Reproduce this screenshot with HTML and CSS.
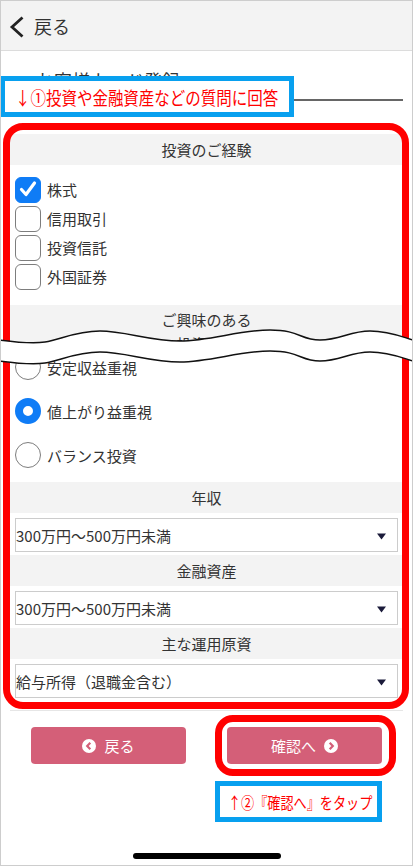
FILE: index.html
```html
<!DOCTYPE html>
<html lang="ja">
<head>
<meta charset="utf-8">
<title>お客様カード登録</title>
<link rel="stylesheet" href="styles.css">
</head>
<body>
<div class="screen">
  <header class="nav">
    <svg class="nav-icon" width="16" height="22" viewBox="0 0 16 22"><path d="M13.5,1.5 L3,11 L13.5,20.5" fill="none" stroke="#222" stroke-width="2.8"/></svg>
    <span class="nav-label">戻る</span>
  </header>

  <h1 class="page-title">お客様カード登録</h1>

  <div class="form">
    <div class="sec-head">投資のご経験</div>
    <div class="check-list">
      <div class="opt"><span class="cb cb-on"><svg width="26" height="26" viewBox="0 0 26 26"><path d="M6.5,13.5 L11,18.5 L19.5,7" fill="none" stroke="#fff" stroke-width="3.2" stroke-linecap="round" stroke-linejoin="round"/></svg></span>株式</div>
      <div class="opt"><span class="cb"></span>信用取引</div>
      <div class="opt"><span class="cb"></span>投資信託</div>
      <div class="opt"><span class="cb"></span>外国証券</div>
    </div>

    <div class="sec-head sec-head-tall">ご興味のある<br>投資方針</div>
    <div class="radio-list">
      <div class="opt opt-radio"><span class="rb"></span>安定収益重視</div>
      <div class="opt opt-radio"><span class="rb rb-on"></span>値上がり益重視</div>
      <div class="opt opt-radio"><span class="rb"></span>バランス投資</div>
    </div>

    <div class="sec-head">年収</div>
    <div class="sel-wrap">
      <div class="sel"><span>300万円〜500万円未満</span><svg class="sel-arrow" width="9" height="7" viewBox="0 0 9 7"><path d="M0,0.5 L9,0.5 L4.5,6.5 Z" fill="#1b1b3a"/></svg></div>
    </div>

    <div class="sec-head">金融資産</div>
    <div class="sel-wrap">
      <div class="sel"><span>300万円〜500万円未満</span><svg class="sel-arrow" width="9" height="7" viewBox="0 0 9 7"><path d="M0,0.5 L9,0.5 L4.5,6.5 Z" fill="#1b1b3a"/></svg></div>
    </div>

    <div class="sec-head">主な運用原資</div>
    <div class="sel-wrap">
      <div class="sel"><span>給与所得（退職金含む）</span><svg class="sel-arrow" width="9" height="7" viewBox="0 0 9 7"><path d="M0,0.5 L9,0.5 L4.5,6.5 Z" fill="#1b1b3a"/></svg></div>
    </div>
  </div>

  <div class="sep"></div>

  <div class="btn-row">
    <div class="btn">
      <svg width="14" height="14" viewBox="0 0 14 14"><circle cx="7" cy="7" r="7" fill="#fff"/><path d="M8.3,3.8 L5.2,7 L8.3,10.2" fill="none" stroke="#d45f78" stroke-width="2.2"/></svg>
      <span>戻る</span>
    </div>
    <div class="btn">
      <span>確認へ</span>
      <svg width="14" height="14" viewBox="0 0 14 14"><circle cx="7" cy="7" r="7" fill="#fff"/><path d="M5.7,3.8 L8.8,7 L5.7,10.2" fill="none" stroke="#d45f78" stroke-width="2.2"/></svg>
    </div>
  </div>

  <!-- annotation overlays -->
  <div class="ring ring-form"></div>
  <svg class="wave" width="413" height="60" viewBox="0 318 413 60">
    <defs>
      <clipPath id="below-bottom">
        <path d="M0,361 C15,363 30,365 45,363 S 75,352 100,352 S 150,362 180,362 S 240,351 270,351 S 300,361 320,361 S 350,352 370,352 S 405,359 413,361 L413,300 L0,300 Z"/>
      </clipPath>
    </defs>
    <path d="M0,340 C15,342 30,344 45,342 S 75,331 100,331 S 150,341 180,341 S 240,330 270,330 S 300,340 320,340 S 350,331 370,331 S 405,338 413,340 L413,400 L0,400 Z" fill="#fff" clip-path="url(#below-bottom)"/>
    <path d="M0,340 C15,342 30,344 45,342 S 75,331 100,331 S 150,341 180,341 S 240,330 270,330 S 300,340 320,340 S 350,331 370,331 S 405,338 413,340" fill="none" stroke="#111" stroke-width="1.5"/>
    <path d="M0,361 C15,363 30,365 45,363 S 75,352 100,352 S 150,362 180,362 S 240,351 270,351 S 300,361 320,361 S 350,352 370,352 S 405,359 413,361" fill="none" stroke="#111" stroke-width="1.5"/>
  </svg>
  <div class="note note-1"><span class="note-text">↓①投資や金融資産などの質問に回答</span></div>
  <div class="ring ring-btn"></div>
  <div class="note note-2"><span class="note-text">↑②『確認へ』をタップ</span></div>
  <div class="home-bar"></div>
</div>
</body>
</html>
```

FILE: styles.css
```css
* { box-sizing: border-box; }

body {
  margin: 0;
  background: #fff;
  font-family: "Noto Sans CJK JP", "Noto Sans", sans-serif;
  color: #333;
}

.screen {
  position: relative;
  width: 413px;
  height: 866px;
  border: 1px solid #cdcdcd;
  overflow: hidden;
  background: #fff;
}

/* nav bar */
.nav {
  height: 50px;
  background: #f3f3f3;
  border-bottom: 1px solid #dcdcdc;
  display: flex;
  align-items: center;
  padding-left: 8px;
  gap: 9px;
}
.nav-icon { display: block; margin-top: 2px; }
.nav-label {
  font-size: 18px;
  line-height: 1;
  color: #333;
}

/* title */
.page-title {
  margin: 0 9px;
  padding: 10px 0 0 26px;
  font-size: 18px;
  font-weight: normal;
  line-height: 38px;
  color: #333;
  border-bottom: 2px solid #666;
}

/* form */
.form {
  margin: 33px 9px 0;
}
.sec-head {
  height: 31px;
  background: #f3f3f3;
  text-align: center;
  font-size: 15px;
  line-height: 31px;
  color: #333;
}
.sec-head-tall {
  height: 40px;
  line-height: 24px;
  padding-top: 3px;
  overflow: hidden;
}

.check-list {
  padding: 10px 5px 14px;
}
.radio-list {
  padding: 0 5px 5px;
}
.opt {
  height: 29px;
  display: flex;
  align-items: center;
  gap: 6px;
  font-size: 15px;
  color: #333;
}
.opt-radio { height: 44px; }

.cb {
  width: 26px;
  height: 26px;
  border: 1.5px solid #7d7d7d;
  border-radius: 6px;
  background: #fff;
  flex: none;
}
.cb svg { display: block; margin: -1.5px; }
.cb-on {
  background: #0f7cf6;
  border-color: #0f7cf6;
}

.rb {
  width: 26px;
  height: 26px;
  border: 1.5px solid #7d7d7d;
  border-radius: 50%;
  background: #fff;
  flex: none;
}
.rb-on {
  border: 8px solid #0f7cf6;
}

.sel-wrap {
  padding: 5px 5px 3px;
}
.sel {
  height: 34px;
  border: 1px solid #cccccc;
  background: #fff;
  display: flex;
  align-items: center;
  justify-content: space-between;
  padding: 0 11px 0 0;
  font-size: 15px;
  color: #333;
}
.sel-arrow { display: block; margin-top: 2px; }

.sep {
  margin: 9px 9px 0;
  border-top: 1px solid #e6e6e6;
}

/* buttons */
.btn-row {
  margin-top: 16px;
  padding: 0 30px;
  display: flex;
  justify-content: space-between;
}
.btn {
  width: 155px;
  height: 37px;
  background: #d45f78;
  border-radius: 4px;
  color: #fff;
  font-size: 15px;
  display: flex;
  align-items: center;
  justify-content: center;
  gap: 8px;
}
.btn svg { display: block; }

/* annotations (overlays) */
.ring {
  position: absolute;
  border: 7px solid #ff0000;
}
.ring-form {
  left: 2px;
  top: 122px;
  width: 406px;
  height: 586px;
  border-radius: 20px;
}
.ring-btn {
  left: 214px;
  top: 714px;
  width: 181px;
  height: 61px;
  border-radius: 18px;
}

.wave {
  position: absolute;
  left: -1px;
  top: 317px;
  display: block;
}

.note {
  position: absolute;
  border: 5px solid #08a0ef;
  background: #fff;
  color: #ff0000;
  display: flex;
  align-items: center;
  white-space: nowrap;
}
.note-text {
  display: inline-block;
  transform-origin: left center;
}
.note-1 {
  left: -1px;
  top: 75px;
  width: 294px;
  height: 41px;
  padding-left: 10px;
  font-size: 18px;
}
.note-1 .note-text { transform: scaleX(0.86); }
.note-2 {
  left: 214px;
  top: 780px;
  width: 167px;
  height: 41px;
  padding-left: 8px;
  font-size: 16px;
}
.note-2 .note-text { transform: scaleX(0.82); }

.home-bar {
  position: absolute;
  left: 132px;
  top: 852px;
  width: 148px;
  height: 6px;
  border-radius: 3px;
  background: #000;
}
```
